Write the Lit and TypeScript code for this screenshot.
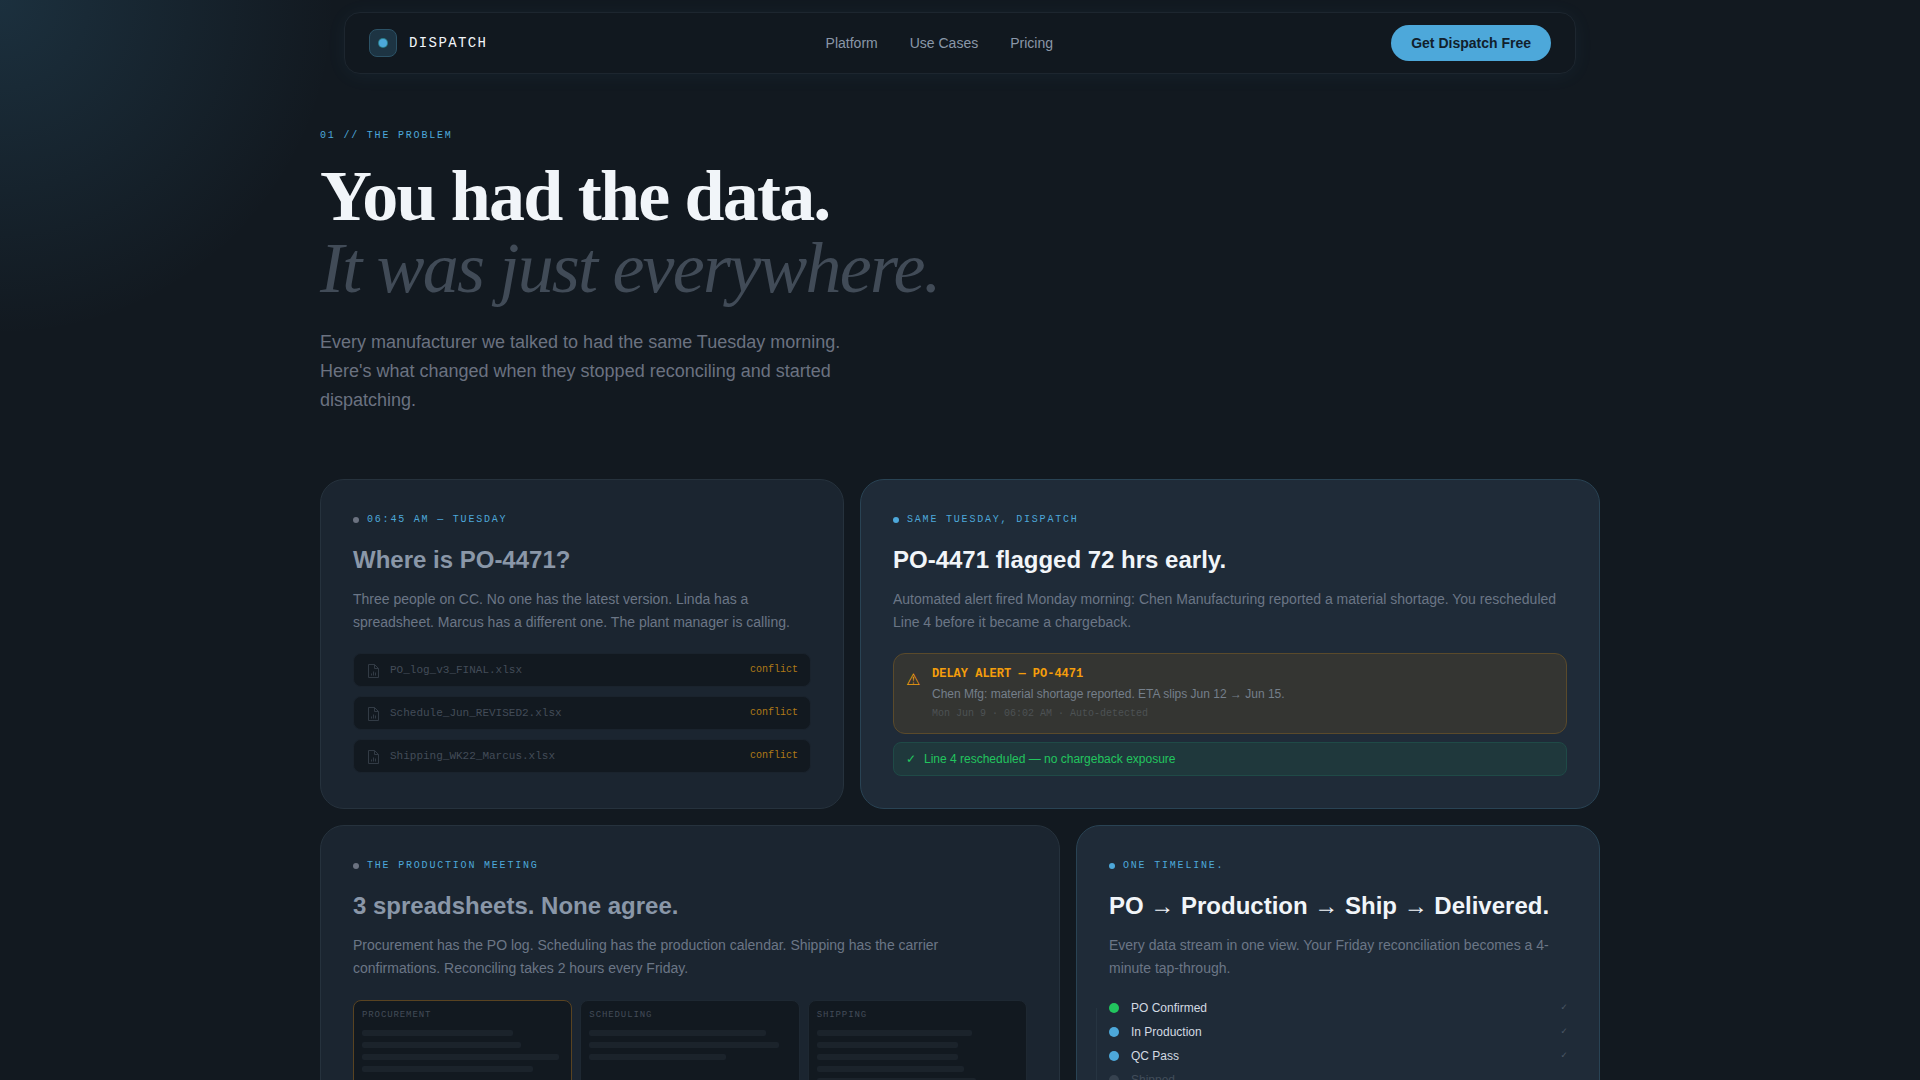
import { LitElement, html, css, svg, nothing } from "lit";
import { customElement, property } from "lit/decorators.js";
import { classMap } from "lit/directives/class-map.js";
import { styleMap } from "lit/directives/style-map.js";

const FILES = ["PO_log_v3_FINAL.xlsx", "Schedule_Jun_REVISED2.xlsx", "Shipping_WK22_Marcus.xlsx"];

const SHEETS = [
  { name: "Procurement", conflict: true, rows: [75, 79, 98, 85] },
  { name: "Scheduling", conflict: false, rows: [88, 94, 68] },
  { name: "Shipping", conflict: false, rows: [77, 70, 70, 73, 79] },
];

const STEPS = [
  { label: "PO Confirmed", state: "done" },
  { label: "In Production", state: "active" },
  { label: "QC Pass", state: "active" },
  { label: "Shipped", state: "pending" },
  { label: "Delivered", state: "pending" },
];

const fileIcon = svg`
  <svg viewBox="0 0 14 16" width="14" height="16" fill="none" stroke="currentColor" aria-hidden="true">
    <path d="M2.5 1.5h6l4 4v9h-10z" />
    <path d="M8.5 1.5v4h4" />
    <path d="M5.5 12.5v-2M7.5 12.5v-4M9.5 12.5v-3" />
  </svg>`;

@customElement("story-card")
export class StoryCard extends LitElement {
  @property() tag = "";
  @property() heading = "";
  @property() text = "";
  @property({ type: Boolean, reflect: true }) bright = false;

  static styles = css`
    :host {
      display: block;
      box-sizing: border-box;
      min-width: 0;
      padding: 32px;
      border: 1px solid #26323d;
      border-radius: 24px;
      background: #1b2530;
    }
    :host([bright]) {
      border-color: #294354;
      background: #1f2b38;
    }
    .tag {
      display: flex;
      align-items: center;
      gap: 8px;
      margin: 0 0 16px;
      font: 10px/16px "Liberation Mono", monospace;
      letter-spacing: 0.18em;
      text-transform: uppercase;
      color: #4da8da;
    }
    .dot {
      width: 6px;
      height: 6px;
      border-radius: 50%;
      background: #6b7280;
    }
    :host([bright]) .dot {
      background: #4da8da;
    }
    .heading {
      margin: 0 0 12px;
      font-size: 24px;
      line-height: 32px;
      font-weight: 700;
      color: #8a97a8;
    }
    :host([bright]) .heading {
      color: #f1f5f9;
    }
    .text {
      margin: 0 0 19px;
      font-size: 14px;
      line-height: 23px;
      color: #6b7686;
    }
  `;

  render() {
    return html`
      <p class="tag"><span class="dot"></span>${this.tag}</p>
      <h2 class="heading">${this.heading}</h2>
      <p class="text">${this.text}</p>
      <slot></slot>
    `;
  }
}

@customElement("app-root")
export class AppRoot extends LitElement {
  static styles = css`
    :host {
      display: block;
      box-sizing: border-box;
      height: 100vh;
      overflow: hidden;
      padding: 12px 24px 0;
      background:
        radial-gradient(circle at 0 0, rgba(77, 168, 218, 0.16), rgba(77, 168, 218, 0) 336px),
        #121920;
      font-family: "Liberation Sans", Arial, sans-serif;
      color: #f1f5f9;
    }
    .nav {
      box-sizing: border-box;
      display: flex;
      justify-content: space-between;
      align-items: center;
      max-width: 1232px;
      margin: 0 auto;
      padding: 12px 24px;
      border: 1px solid #1d262f;
      border-radius: 16px;
      background: #11181f;
      box-shadow: 0 2px 20px rgba(77, 168, 218, 0.06);
    }
    .brand {
      display: flex;
      align-items: center;
      gap: 12px;
      font: 14px/20px "Liberation Mono", monospace;
      letter-spacing: 0.1em;
      color: #f1f5f9;
      text-decoration: none;
    }
    .logo {
      box-sizing: border-box;
      display: grid;
      place-items: center;
      width: 28px;
      height: 28px;
      border: 1px solid #2c5266;
      border-radius: 8px;
      background: #1d3443;
    }
    .logo-dot {
      width: 8px;
      height: 8px;
      border-radius: 50%;
      background: #4da8da;
      box-shadow: 0 0 0 1px #2b7f8c;
    }
    .links {
      display: flex;
      gap: 32px;
    }
    .link {
      font-size: 14px;
      line-height: 20px;
      color: #8a97a8;
      text-decoration: none;
    }
    .cta {
      height: 36px;
      padding: 0 20px;
      border: 0;
      border-radius: 18px;
      background: #4da8da;
      font: 700 14px/20px "Liberation Sans", Arial, sans-serif;
      color: #11202c;
    }
    .page {
      max-width: 1280px;
      margin: 0 auto;
      padding-top: 54px;
    }
    .eyebrow {
      margin: 0 0 16px;
      font: 10px/16px "Liberation Mono", monospace;
      letter-spacing: 0.18em;
      color: #4da8da;
    }
    .title {
      margin: 0 0 24px;
      font: 700 72px/72px "Liberation Serif", "Times New Roman", serif;
      letter-spacing: -0.025em;
    }
    .title-soft {
      display: block;
      font-style: italic;
      font-weight: 400;
      color: #414b57;
    }
    .lead {
      max-width: 560px;
      margin: 0 0 64px;
      font-size: 18px;
      line-height: 29px;
      color: #6b7280;
    }
    .cards {
      display: grid;
      grid-template-columns: repeat(12, minmax(0, 1fr));
      gap: 16px;
    }
    .wide {
      grid-column: span 7;
    }
    .narrow {
      grid-column: span 5;
    }
    .files,
    .steps {
      list-style: none;
      margin: 0;
      padding: 0;
    }
    .files {
      display: grid;
      gap: 9px;
    }
    .file {
      box-sizing: border-box;
      display: flex;
      align-items: center;
      gap: 10px;
      height: 34px;
      padding: 0 12px;
      border: 1px solid #1a232d;
      border-radius: 8px;
      background: #121920;
      font: 11px/16px "Liberation Mono", monospace;
      color: #434c58;
    }
    .file svg {
      flex: none;
      margin-top: 2px;
      color: #323b45;
    }
    .conflict {
      margin-left: auto;
      font-size: 10px;
      color: #b07a17;
    }
    .alert {
      display: flex;
      gap: 12px;
      padding: 11px 12px;
      border: 1px solid #5a4a2b;
      border-radius: 12px;
      background: #343532;
    }
    .alert-icon {
      width: 14px;
      padding-top: 5px;
      font-size: 16px;
      line-height: 20px;
      color: #f59e0b;
    }
    .alert-title,
    .alert-text,
    .alert-time {
      margin: 0;
    }
    .alert-title {
      font: 700 12px/18px "Liberation Mono", monospace;
      color: #f59e0b;
    }
    .alert-text {
      margin: 1px 0 2px;
      font-size: 12px;
      line-height: 20px;
      color: #757f8a;
    }
    .alert-time {
      font: 10px/16px "Liberation Mono", monospace;
      color: #4d5254;
    }
    .ok {
      display: flex;
      gap: 8px;
      margin: 8px 0 0;
      padding: 8px 12px;
      border: 1px solid #1f4a47;
      border-radius: 8px;
      background: #1f383c;
      font-size: 12px;
      line-height: 16px;
      color: #22c55e;
    }
    .sheets {
      display: grid;
      grid-template-columns: repeat(3, minmax(0, 1fr));
      gap: 8px;
      padding-top: 1px;
    }
    .sheet {
      display: flex;
      flex-direction: column;
      gap: 6px;
      min-height: 96px;
      padding: 8px;
      border: 1px solid #1e2832;
      border-radius: 8px;
      background: #121920;
    }
    .sheet.clash {
      border-color: #594321;
    }
    .sheet-name {
      margin: 0 0 3px;
      font: 9px/12px "Liberation Mono", monospace;
      letter-spacing: 0.1em;
      text-transform: uppercase;
      color: #434c58;
    }
    .bar {
      height: 6px;
      border-radius: 2px;
      background: #1b232b;
    }
    .steps {
      position: relative;
      display: grid;
      gap: 8px;
      padding-top: 1px;
    }
    .steps::before {
      content: "";
      position: absolute;
      top: 9px;
      bottom: 9px;
      left: -13px;
      width: 1px;
      background: #263441;
    }
    .step {
      display: flex;
      align-items: center;
      gap: 12px;
      font-size: 12px;
      line-height: 16px;
      color: #d3dae2;
    }
    .step-dot {
      width: 10px;
      height: 10px;
      border-radius: 50%;
      background: #4da8da;
    }
    .done .step-dot {
      background: #22c55e;
    }
    .pending {
      color: #414d5a;
    }
    .pending .step-dot {
      background: #36424f;
    }
    .step-check {
      margin-left: auto;
      font: 10px/12px "Liberation Mono", monospace;
      color: #4a5765;
    }
  `;

  render() {
    return html`
      <nav class="nav" aria-label="Main">
        <a class="brand" href="#"><span class="logo"><span class="logo-dot"></span></span>DISPATCH</a>
        <div class="links">
          ${["Platform", "Use Cases", "Pricing"].map((l) => html`<a class="link" href="#">${l}</a>`)}
        </div>
        <button class="cta" type="button">Get Dispatch Free</button>
      </nav>

      <main class="page">
        <p class="eyebrow">01 // THE PROBLEM</p>
        <h1 class="title">You had the data.<span class="title-soft">It was just everywhere.</span></h1>
        <p class="lead">
          Every manufacturer we talked to had the same Tuesday morning. Here's what changed when they stopped
          reconciling and started dispatching.
        </p>

        <div class="cards">
          <story-card
            class="narrow"
            tag="06:45 AM — Tuesday"
            heading="Where is PO-4471?"
            text="Three people on CC. No one has the latest version. Linda has a spreadsheet. Marcus has a different one. The plant manager is calling."
          >
            <ul class="files">
              ${FILES.map(
                (f) => html`<li class="file">${fileIcon}<span>${f}</span><span class="conflict">conflict</span></li>`
              )}
            </ul>
          </story-card>

          <story-card
            class="wide"
            bright
            tag="Same Tuesday, Dispatch"
            heading="PO-4471 flagged 72 hrs early."
            text="Automated alert fired Monday morning: Chen Manufacturing reported a material shortage. You rescheduled Line 4 before it became a chargeback."
          >
            <div class="alert">
              <span class="alert-icon">⚠</span>
              <div>
                <p class="alert-title">DELAY ALERT — PO-4471</p>
                <p class="alert-text">Chen Mfg: material shortage reported. ETA slips Jun 12 → Jun 15.</p>
                <p class="alert-time">Mon Jun 9 · 06:02 AM · Auto-detected</p>
              </div>
            </div>
            <p class="ok"><span>✓</span><span>Line 4 rescheduled — no chargeback exposure</span></p>
          </story-card>

          <story-card
            class="wide"
            tag="The Production Meeting"
            heading="3 spreadsheets. None agree."
            text="Procurement has the PO log. Scheduling has the production calendar. Shipping has the carrier confirmations. Reconciling takes 2 hours every Friday."
          >
            <div class="sheets">
              ${SHEETS.map(
                (s) => html`
                  <section class=${classMap({ sheet: true, clash: s.conflict })}>
                    <h3 class="sheet-name">${s.name}</h3>
                    ${s.rows.map((w) => html`<div class="bar" style=${styleMap({ width: `${w}%` })}></div>`)}
                  </section>
                `
              )}
            </div>
          </story-card>

          <story-card
            class="narrow"
            bright
            tag="One timeline."
            heading="PO → Production → Ship → Delivered."
            text="Every data stream in one view. Your Friday reconciliation becomes a 4-minute tap-through."
          >
            <ol class="steps">
              ${STEPS.map(
                (s) => html`
                  <li class="step ${s.state}">
                    <span class="step-dot"></span><span>${s.label}</span>
                    ${s.state === "pending" ? nothing : html`<span class="step-check">✓</span>`}
                  </li>
                `
              )}
            </ol>
          </story-card>
        </div>
      </main>
    `;
  }
}
